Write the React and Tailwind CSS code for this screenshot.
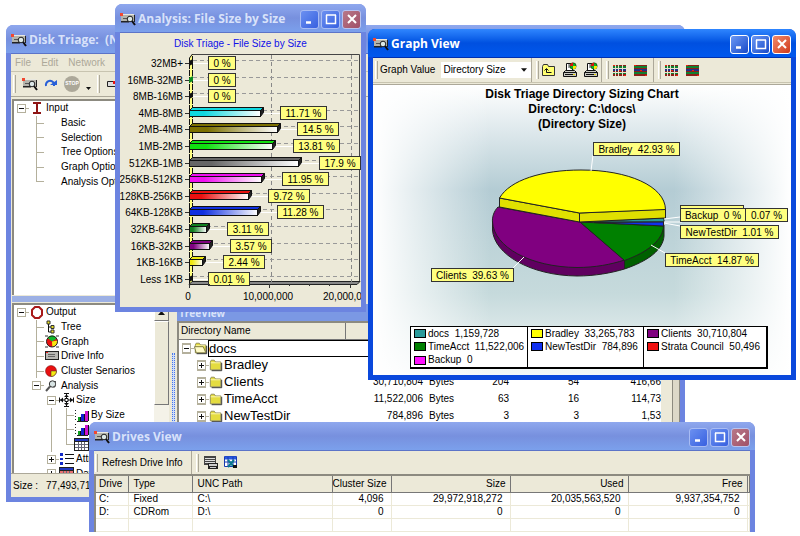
import React from 'react';

/* ---------- small drawings ---------- */

function DiskIcon() {
  return (
    <svg viewBox="0 0 16 14" className="h-3.5 w-4 shrink-0">
      <path d="M1 2h13v7H1z" fill="#b4b4ac" />
      <path d="M2 2h12v1H2z" fill="#e8e8e0" />
      <path d="M1 9h8v1.500H1zM14 3h1v7h-1z" fill="#222" />
      <path d="M3 6h4v1H3z" fill="#555" />
      <path d="M0 1h3v3H0z" fill="#f04830" />
      <circle cx="10" cy="7" r="2.800" fill="#dce8e8" stroke="#222" />
      <path d="M12 9l3 4" stroke="#111" strokeWidth="2" />
    </svg>
  );
}

function FolderIcon({ open = false }) {
  return (
    <svg viewBox="0 0 16 14" className="h-3.5 w-3.5 shrink-0">
      <path d="M1.500 12.500h12v-9h-6l-1.500-2h-3.500l-1 2z" fill="#e4dc40" stroke="#8a8650" />
      <path d="M2 4h11v1H2z" fill="#fffbc0" />
      {open && <path d="M0.500 5.500h10l3 7h-11z" fill="#fffbc8" stroke="#77733a" />}
      <path d="M14.500 4.500v9H3" fill="none" stroke="#222" />
    </svg>
  );
}

function UpFolderIcon() {
  return (
    <svg viewBox="0 0 16 14" className="h-3.5 w-4">
      <path d="M1.500 12.500v-9l1-2h4l1 2h6v9z" fill="#ffff70" stroke="#333" />
      <path d="M5.500 9.500h5M3.500 7.500l2-2 2 2M5.500 6v3.500" fill="none" stroke="#111" />
    </svg>
  );
}

function PrinterIcon() {
  return (
    <svg viewBox="0 0 16 16" className="size-4">
      <path d="M4.500 8.500v-7h6v7z" fill="#fff" stroke="#111" />
      <path d="M6 3h3M6 5h3" stroke="#444" />
      <circle cx="11" cy="4" r="3.200" fill="#10b020" stroke="#111" strokeWidth=".5" />
      <path d="M11 4V.8A3.200 3.200 0 0 0 8 4z" fill="#e01010" />
      <path d="M11 4h3.200A3.200 3.200 0 0 1 11 7.200z" fill="#ffe800" />
      <path d="M1.500 10.500l2-2h9l2 2v4h-13z" fill="#c8c8c0" stroke="#111" />
      <path d="M1.500 10.500h13M3 12.500h8" stroke="#111" />
      <path d="M11 12h2v1h-2z" fill="#e0d000" />
    </svg>
  );
}

function PatchIcon({ split = false }) {
  return (
    <svg viewBox="0 0 13 11" className="h-[11px] w-[13px]" shapeRendering="crispEdges">
      <path d="M0 0h13v11H0z" fill="#8a2018" />
      <path d="M0 1h13v2H0zM0 7h13v2H0z" fill="#108030" />
      <path d="M0 4h13v2H0z" fill="#203088" />
      {split && <path d="M2 0h1v11H2zM5 0h1v11H5zM9 0h1v11H9zM0 3h13v1H0zM0 7h13v1H0z" fill="#e6e2cc" />}
      <path d="M0 0h2v1H0zM11 10h2v1h-2zM6 5h2v1H6z" fill="#f02010" />
    </svg>
  );
}

function BarsIcon() {
  return (
    <svg viewBox="0 0 14 13" className="h-[13px] w-3.5 shrink-0" shapeRendering="crispEdges">
      <path d="M0 1h1v1H0zM0 4h1v1H0zM0 7h1v1H0zM0 10h1v1H0zM2 12h11v1H2z" fill="#222" />
      <path d="M3 8h2v4H3z" fill="#10a020" />
      <path d="M6 5h3v7H6z" fill="#1020d0" />
      <path d="M10 2h3v10h-3z" fill="#d010d0" />
      <path d="M5 8h1v4H5zM9 5h1v7H9zM13 2h1v10h-1z" fill="#111" />
    </svg>
  );
}

function GridIcon({ color = '#fff' }) {
  return (
    <svg viewBox="0 0 15 13" className="h-[13px] w-[15px] shrink-0" shapeRendering="crispEdges">
      <path d="M0 0h15v13H0z" fill="#222" />
      <path d="M1 1h13v2H1z" fill="#2038c0" />
      <path d="M1 4h13v8H1z" fill={color} />
      <path d="M4 4h1v8H4zM7 4h1v8H7zM10 4h1v8h-1zM1 6h13v1H1zM1 9h13v1H1z" fill="#667" />
    </svg>
  );
}

const treeIcons = {
  input: (
    <svg viewBox="0 0 10 12" className="h-3 w-2.5" shapeRendering="crispEdges">
      <path d="M1 0h8v2H6v8h3v2H1v-2h3V2H1z" fill="#8e1414" />
    </svg>
  ),
  output: (
    <svg viewBox="0 0 12 13" className="h-[13px] w-3">
      <path d="M4 1h4l3 3v5l-3 3H4L1 9V4z" fill="none" stroke="#a81818" strokeWidth="2" />
    </svg>
  ),
  tree: (
    <svg viewBox="0 0 12 14" className="h-3.5 w-3">
      <path d="M2.500 2v10h4M2.500 7h4" fill="none" stroke="#111" />
      <path d="M1 1h3v3H1zM5 5.500h3v3H5zM5 10h3v3H5z" fill="#e8e020" stroke="#333" />
    </svg>
  ),
  graph: (
    <svg viewBox="0 0 14 13" className="h-[13px] w-3.5">
      <path d="M0 1h3M11 1h3M0 12h3M11 12h3" stroke="#333" />
      <circle cx="7" cy="6.500" r="5.500" fill="#e81010" />
      <path d="M7 6.500L2.500 3a5.500 5.500 0 0 1 9.500.5z" fill="#10b828" />
      <path d="M7 6.500l5.300-1a5.500 5.500 0 0 1-5 6.500z" fill="#f8e810" />
      <circle cx="7" cy="6.500" r="5.500" fill="none" stroke="#222" />
    </svg>
  ),
  drive: (
    <svg viewBox="0 0 14 10" className="h-2.5 w-3.5" shapeRendering="crispEdges">
      <path d="M0 0h14v9H0z" fill="#222" />
      <path d="M1 1h12v7H1z" fill="#b8b8b4" />
      <path d="M3 3h7v1H3zM3 5h7v1H3z" fill="#666" />
      <path d="M1 1h2v1H1z" fill="#f02020" />
    </svg>
  ),
  cluster: (
    <svg viewBox="0 0 13 12" className="h-3 w-[13px]">
      <circle cx="6" cy="6" r="5.500" fill="#e81010" stroke="#611" strokeWidth=".5" />
      <path d="M6 6h5.500A5.500 5.500 0 0 1 6 11.500z" fill="#f8e810" stroke="#333" strokeWidth=".5" />
    </svg>
  ),
  analysis: (
    <svg viewBox="0 0 13 12" className="h-3 w-[13px]">
      <circle cx="7.500" cy="4" r="3.200" fill="#d8e4e4" stroke="#333" />
      <path d="M10.500 1v5l-2 2" fill="none" stroke="#555" />
      <path d="M5 6.500L1 11" stroke="#555" strokeWidth="2" />
    </svg>
  ),
  size: (
    <svg viewBox="0 0 15 14" className="h-3.5 w-[15px]">
      <path d="M7.500 1v12M1 7h13M0.500 4.500v5M14.500 4.500v5M5 .5h5M5 13.500h5" stroke="#111" />
      <path d="M7.500 1.500L5 4h5zM7.500 12.500L5 10h5zM1 7l3-2.500v5zM14 7l-3-2.500v5z" fill="#111" />
      <path d="M6 5.500h3v3H6z" fill="#fff" stroke="#111" />
    </svg>
  ),
  bars: <BarsIcon />,
  grid: <GridIcon />,
  list: (
    <svg viewBox="0 0 14 12" className="h-3 w-3.5" shapeRendering="crispEdges">
      <path d="M0 0h3v3H0zM0 5h3v2H0zM0 9h3v3H0z" fill="#1028c8" />
      <path d="M5 1h9v1H5zM5 5h9v1H5zM5 10h9v1H5z" fill="#111" />
    </svg>
  ),
  date: <GridIcon color="#e87070" />,
};

/* ---------- window chrome ---------- */

function CaptionButton({ label, close = false, active, children }) {
  const tone = close
    ? active
      ? 'bg-linear-to-br from-[#f08868] to-[#d03818] border-white'
      : 'bg-linear-to-br from-[#b87888] to-[#a05068] border-[#b8c4f0]'
    : active
      ? 'bg-linear-to-br from-[#6c98f4] to-[#1848c8] border-white'
      : 'bg-linear-to-br from-[#6c90f0] to-[#3860e0] border-[#a8bcf4]';
  return (
    <button type="button" aria-label={label} className={`flex size-[19px] items-center justify-center rounded-[3px] border ${tone}`}>
      <svg viewBox="0 0 12 12" className="size-3" stroke="#fff" fill="none">
        {children}
      </svg>
    </button>
  );
}

function TitleBar({ title, active = false, buttons = true }) {
  return (
    <header
      className={`flex h-7 shrink-0 items-center gap-0.5 rounded-t-[6px] px-[5px] pt-0.5 ${
        active
          ? 'bg-linear-to-b from-[#2f86ff] via-[#0050e0] to-[#0058ee]'
          : 'bg-linear-to-b from-[#8fa8ee] via-[#7790de] to-[#7ba0ec]'
      }`}
    >
      <DiskIcon />
      <h1 className={`flex-1 whitespace-pre font-["Open_Sans",sans-serif] text-[12px] leading-4 font-bold ${active ? 'text-white' : 'text-[#d8e2fa]'}`}>
        {title}
      </h1>
      {buttons && (
        <div className="flex gap-0.5">
          <CaptionButton label="Minimize" active={active}><path d="M2 9.500h5" strokeWidth="2.500" /></CaptionButton>
          <CaptionButton label="Maximize" active={active}><path d="M1.500 2v8.500h9V2M1 2h10" strokeWidth="1.500" /></CaptionButton>
          <CaptionButton label="Close" active={active} close><path d="M2 2l8 8M10 2l-8 8" strokeWidth="2" /></CaptionButton>
        </div>
      )}
    </header>
  );
}

function Win({ className, active = false, title, buttons, children }) {
  return (
    <section className={`absolute flex flex-col overflow-hidden rounded-t-[7px] ${active ? 'bg-[#0a48dc]' : 'bg-[#6c84e0]'} ${className}`}>
      <TitleBar title={title} active={active} buttons={buttons} />
      <div className={`mx-[5px] mb-[5px] flex min-h-0 flex-1 flex-col border-t ${active ? 'border-[#0030b0]' : 'border-[#5c74c8]'} bg-[#ece9d8]`}>
        {children}
      </div>
    </section>
  );
}

function Grip() {
  return <span className="h-[18px] w-[3px] shrink-0 border-r border-l border-r-[#aca899] border-l-white" />;
}

function Divider() {
  return <span className="h-full w-px shrink-0 bg-[#aca899]" />;
}

/* ---------- tree ---------- */

function Guide({ kind }) {
  const line = '#b4b09c';
  return (
    <svg viewBox="0 0 15 15" className="h-full w-[15px] shrink-0" preserveAspectRatio="none" shapeRendering="crispEdges">
      {(kind === 'v' || kind === 't') && <path d="M7 0h1v15H7z" fill={line} />}
      {kind === 'l' && <path d="M7 0h1v7H7z" fill={line} />}
      {(kind === 't' || kind === 'l') && <path d="M7 7h8v1H7z" fill={line} />}
      {(kind === '-' || kind === '+') && (
        <g>
          <path d="M3 3h9v9H3z" fill="#b4b09c" />
          <path d="M4 4h7v7H4z" fill="#fff" />
          <path d="M5 7h5v1H5z" fill="#111" />
          {kind === '+' && <path d="M7 5h1v5H7z" fill="#111" />}
          <path d="M12 7h3v1h-3z" fill={line} />
        </g>
      )}
    </svg>
  );
}

function Tree({ label, rows, className }) {
  return (
    <ul aria-label={label} className={`flex flex-col ${className}`}>
      {rows.map(([guides, icon, text], i) => (
        <li key={i} className="flex min-h-0 flex-1 items-center">
          {guides.split('').map((g, j) => (
            <Guide key={j} kind={g} />
          ))}
          <span className="flex w-[15px] shrink-0 justify-center">{treeIcons[icon]}</span>
          <span className="pl-0.5 text-[10px] leading-3 whitespace-nowrap">{text}</span>
        </li>
      ))}
    </ul>
  );
}

const inputRows = [
  ['-', 'input', 'Input'],
  [' t', '', 'Basic'],
  [' t', '', 'Selection'],
  [' t', '', 'Tree Options'],
  [' t', '', 'Graph Options'],
  [' l', '', 'Analysis Options'],
];

const outputRows = [
  ['-', 'output', 'Output'],
  [' t', 'tree', 'Tree'],
  [' t', 'graph', 'Graph'],
  [' t', 'drive', 'Drive Info'],
  [' t', 'cluster', 'Cluster Senarios'],
  [' -', 'analysis', 'Analysis'],
  ['  -', 'size', 'Size'],
  ['  vt', 'bars', 'By Size'],
  ['  vt', 'bars', 'By Count'],
  ['  vl', 'grid', 'Table'],
  ['  +', 'list', 'Attributes'],
  ['  +', 'date', 'Dates'],
];

const directories = [
  ['docs', '', '', '', ''],
  ['Bradley', '33,265,783', '310', '48', '502,11'],
  ['Clients', '30,710,804', '204', '54', '416,66'],
  ['TimeAcct', '11,522,006', '63', '16', '114,73'],
  ['NewTestDir', '784,896', '3', '3', '1,53'],
];

function MainWindow() {
  return (
    <Win className="top-[25px] left-[6px] h-[477px] w-[679px]" title="Disk Triage:  (New)" buttons={false}>
      <nav className="flex h-[17px] shrink-0 items-center gap-2.5 px-1 text-[10px] leading-4 text-[#aca899]">
        <button type="button">File</button>
        <button type="button">Edit</button>
        <button type="button">Network</button>
      </nav>
      <div className="flex h-[26px] shrink-0 items-center gap-1.5 border-y border-t-[#c8c4b0] border-b-[#aca899] px-0.5">
        <Grip />
        <button type="button" aria-label="Scan drive"><DiskIcon /></button>
        <button type="button" aria-label="Refresh">
          <svg viewBox="0 0 14 12" className="h-3 w-3.5"><path d="M2 8a4 4 0 0 1 8-2v2" fill="none" stroke="#2860d8" strokeWidth="2" /><path d="M6 7h7V2z" fill="#2860d8" /></svg>
        </button>
        <button type="button" aria-label="Stop" className="flex h-4 w-4 items-center justify-center rounded-full bg-[#aca899] text-[5px] font-bold text-white">STOP</button>
        <svg viewBox="0 0 5 14" className="h-3.5 w-[5px]"><path d="M0 10h5l-2.500 3z" fill="#111" /></svg>
        <Grip />
        <svg viewBox="0 0 14 12" className="h-3 w-3.5 shrink-0"><path d="M1.500 3.500h11v5h-11z" fill="#ddd" stroke="#222" /><path d="M9 0h3v3h2v3H7V3h2z" fill="#e81010" /></svg>
      </div>
      <div className="flex min-h-0 flex-1 pt-0.5 pl-px">
        <div className="flex w-[157px] shrink-0 flex-col">
          <div className="h-[196px] shrink-0 border-t-2 border-l-2 border-[#8c8a80] bg-white">
            <Tree label="Input" rows={inputRows} className="h-[88px]" />
          </div>
          <div className="my-px h-[6px] shrink-0 bg-[#9cb0e4]" />
          <div className="flex min-h-0 flex-1 overflow-hidden border-t-2 border-l-2 border-[#8c8a80] bg-white">
            <Tree label="Output" rows={outputRows} className="h-44 min-w-0 flex-1 overflow-hidden" />
            <div className="flex w-[15px] shrink-0 flex-col bg-[#f4f2e8]">
              <button type="button" aria-label="Scroll up" className="flex h-4 shrink-0 items-center justify-center border border-white border-r-[#777] border-b-[#777] bg-[#ece9d8]">
                <svg viewBox="0 0 7 4" className="h-1 w-[7px]"><path d="M0 4h7L3.500 0z" fill="#111" /></svg>
              </button>
              <div className="h-[84px] border border-white border-r-[#777] border-b-[#777] bg-[#ece9d8]" />
            </div>
          </div>
        </div>
        <div className="flex w-2 shrink-0 flex-col items-center justify-end pb-10">
          <span className="h-20 w-[3px] border-x border-dotted border-[#4878e8] bg-[#d0dcf8]" />
        </div>
        <div className="flex min-w-0 flex-1 flex-col">
          <div className="h-[205px] shrink-0" />
          <h2 className="flex h-[17px] shrink-0 items-center bg-[#7b98e4] px-0.5 font-['Open_Sans',sans-serif] text-[10px] leading-3 font-bold text-[#d8e2fa]">TreeView</h2>
          <div className="flex min-h-0 flex-1 border-t-2 border-l-2 border-[#8c8a80] bg-white">
            <table className="w-[482px] shrink-0 table-fixed border-collapse self-start">
              <colgroup>
                <col className="w-[166px]" />
                <col className="w-[78px]" />
                <col className="w-[34px]" />
                <col className="w-[52px]" />
                <col className="w-[70px]" />
                <col />
              </colgroup>
              <thead>
                <tr className="h-4 bg-[#ece9d8] text-left text-[10px] leading-3">
                  <th className="border-r border-b border-[#777] px-0.5 font-normal">Directory Name</th>
                  <th className="border-b border-[#777]" />
                  <th className="border-b border-[#777]" />
                  <th className="border-b border-[#777]" />
                  <th className="border-b border-[#777]" />
                  <th className="border-b border-[#777]" />
                </tr>
              </thead>
              <tbody>
                {directories.map(([name, size, files, dirs, used], i) => (
                  <tr key={name} className="h-[17px] text-right text-[10px] leading-4">
                    <td className="p-0" colSpan={i ? 1 : 2}>
                      <div className={`flex h-[17px] items-center text-left text-[13px] leading-4 ${i ? 'pl-[15px]' : ''}`}>
                        <Guide kind={i ? '+' : '-'} />
                        <FolderIcon open={!i} />
                        <span className={`h-full flex-1 ${i ? 'pl-px' : 'border border-r-0 border-black'}`}>{name}</span>
                      </div>
                    </td>
                    {i > 0 && <td className="p-0">{size}</td>}
                    <td className="p-0 pl-1.5 text-left">{size && 'Bytes'}</td>
                    <td className="p-0">{files}</td>
                    <td className="p-0">{dirs}</td>
                    <td className="p-0">{used}</td>
                  </tr>
                ))}
              </tbody>
            </table>
            <div className="flex-1 bg-[#ece9d8]" />
            <div className="w-2 shrink-0 border-x border-[#8c8a80] bg-[#dcd8c8]" />
          </div>
        </div>
      </div>
      <footer className="flex h-6 shrink-0 items-center gap-2 border-t border-[#aca899] px-0.5 text-[10px] leading-4">
        <span>Size :</span>
        <span>77,493,713</span>
      </footer>
    </Win>
  );
}

/* ---------- file size analysis ---------- */

const sizeBars = [
  ['32MB+', 0, 208, 28, '0 %', '#111111'],
  ['16MB-32MB', 0, 208, 28, '0 %', '#0a8a20'],
  ['8MB-16MB', 0, 208, 28, '0 %', '#111111'],
  ['4MB-8MB', 261, 280, 47, '11.71 %', '#10d8e0'],
  ['2MB-4MB', 278, 297, 42, '14.5 %', '#7c7000'],
  ['1MB-2MB', 273, 293, 47, '13.81 %', '#10e010'],
  ['512KB-1MB', 299, 319, 42, '17.9 %', '#666666'],
  ['256KB-512KB', 262, 282, 47, '11.95 %', '#f010f0'],
  ['128KB-256KB', 249, 268, 42, '9.72 %', '#e81010'],
  ['64KB-128KB', 258, 277, 47, '11.28 %', '#1030e0'],
  ['32KB-64KB', 207, 227, 42, '3.11 %', '#108020'],
  ['16KB-32KB', 210, 230, 42, '3.57 %', '#800080'],
  ['1KB-16KB', 203, 223, 42, '2.44 %', '#f0e810'],
  ['Less 1KB', 0, 208, 42, '0.01 %', '#111111'],
];

function Tag({ x, y, w, text }) {
  return (
    <g>
      <rect x={x + 0.5} y={y + 0.5} width={w - 1} height="13" fill="#ffff80" stroke="#333" />
      <text x={x + w / 2} y={y + 11} textAnchor="middle" className="whitespace-pre">{text}</text>
    </g>
  );
}

function AnalysisWindow() {
  return (
    <Win className="top-[4px] left-[115px] h-[308px] w-[251px]" title="Analysis: File Size by Size">
      <h2 className="pt-1 pb-0.5 text-center text-[10px] leading-[14px] text-[#1010e8]">Disk Triage - File Size by Size</h2>
      <svg viewBox="120 53 241 254" className="w-full text-[10px]" role="img" aria-label="File size by size">
        <defs>
          {sizeBars.map(([name, , , , , color], i) => (
            <linearGradient key={name} id={`bar-${i}`}>
              <stop offset="0" stopColor={color} />
              <stop offset="0.2" stopColor={color} />
              <stop offset="1" stopColor="#fff" />
            </linearGradient>
          ))}
        </defs>
        <path d="M189.500 58l3-4v228l-3 4z" fill="#ffff80" stroke="#111" strokeDasharray="6 1" />
        <path d="M192.500 54.500H359.500V282" fill="none" stroke="#444" />
        <path d="M189 284.500l3-3h168l-3 3z" fill="#888" stroke="#222" />
        <path d="M271.500 55v227M351.500 55v227" stroke="#888" strokeDasharray="4 3" />
        {sizeBars.map(([name], i) => (
          <path key={name} d={`M193 ${Math.round(60 + i * 16.6) + 0.5}h166`} stroke="#999" strokeDasharray="4 3" />
        ))}
        {sizeBars.map(([name, end, tagX, tagW, value, color], i) => {
          const y = Math.round(63 + i * 16.6);
          return (
            <g key={name}>
              <text x="183" y={y + 4} textAnchor="end">{name}</text>
              <path d={`M185 ${y + 0.5}h4`} stroke="#333" />
              <path d={`M${end || 190} ${y + 0.5}H${tagX}`} stroke="#fff" />
              {end > 0 && (
                <g stroke="#111">
                  <path d={`M189.500 ${y - 2.5}l3-3H${end + 2.5}l-3 3z`} fill={color} />
                  <path d={`M${end - 0.5} ${y - 2.5}l3-3v5l-3 4z`} fill="#222" />
                  <rect x="189.500" y={y - 2.5} width={end - 190} height="6" fill={`url(#bar-${i})`} />
                </g>
              )}
              {!end && <path d={`M189 ${y - 2}l4-2v5l-4 2z`} fill={color} />}
              <Tag x={tagX} y={y - 7} w={tagW} text={value} />
            </g>
          );
        })}
        <path d="M189.500 284v4M269.500 284v4M350.500 284v4M209.500 284v2M229.500 284v2M249.500 284v2M289.500 284v2M309.500 284v2M329.500 284v2" stroke="#333" />
        <text x="188" y="300" textAnchor="middle">0</text>
        <text x="268" y="300" textAnchor="middle">10,000,000</text>
        <text x="323" y="300">20,000,000</text>
      </svg>
    </Win>
  );
}

/* ---------- graph view ---------- */

const legend = [
  ['docs', '1,159,728', 'bg-[#2a9a9a]'],
  ['Bradley', '33,265,783', 'bg-[#ffff00]'],
  ['Clients', '30,710,804', 'bg-[#800080]'],
  ['TimeAcct', '11,522,006', 'bg-[#008000]'],
  ['NewTestDir', '784,896', 'bg-[#1030f0]'],
  ['Strata Council', '50,496', 'bg-[#f01010]'],
  ['Backup', '0', 'bg-[#ff10ff]'],
  null,
  null,
];

function GraphWindow() {
  return (
    <Win active className="top-[29px] left-[368px] h-[351px] w-[428px]" title="Graph View">
      <div className="flex h-[25px] shrink-0 items-center border-b border-[#c8c4b0] pl-0.5 text-[10px] leading-4">
        <Grip />
        <label htmlFor="graph-value" className="pr-1.5 pl-0.5">Graph Value</label>
        <span className="flex h-4 w-[90px] items-center bg-white">
          <select id="graph-value" defaultValue="size" className="h-4 min-w-0 flex-1 appearance-none bg-transparent pl-0.5 leading-4">
            <option value="size">Directory Size</option>
          </select>
          <svg viewBox="0 0 9 5" className="mr-1 h-1.5 w-1.5"><path d="M0 0h9L4.500 5z" fill="#111" /></svg>
        </span>
        <span className="flex h-full items-center gap-1"><Divider /><Grip /></span>
        <span className="flex items-center gap-[5px] px-0.5">
          <button type="button" aria-label="Up one level"><UpFolderIcon /></button>
          <button type="button" aria-label="Print graph"><PrinterIcon /></button>
          <button type="button" aria-label="Print all graphs"><PrinterIcon /></button>
        </span>
        <span className="flex h-full items-center gap-1"><Divider /><Grip /></span>
        <span className="flex items-center gap-2 px-1">
          <button type="button" aria-label="Pattern fill"><PatchIcon split /></button>
          <button type="button" aria-label="Solid fill"><PatchIcon /></button>
        </span>
        <span className="flex h-full items-center gap-1 pl-0.5"><Divider /><Grip /></span>
        <span className="flex items-center gap-2 px-1">
          <button type="button" aria-label="Pattern border"><PatchIcon split /></button>
          <button type="button" aria-label="Solid border"><PatchIcon /></button>
        </span>
      </div>
      <div className="mt-px flex flex-1 flex-col border-t border-[#aca899] bg-[linear-gradient(to_right,#fff,#ffffff00_28%,#ffffff00_72%,#fff),linear-gradient(to_bottom,#fff,#b4ccd4_36%,#c6dadc_72%,#f4f8f8)]">
        <h2 className="pt-0.5 pb-0.5 text-center text-[12px] leading-[15px] font-bold">
          Disk Triage Directory Sizing Chart
          <br />
          Directory: C:\docs\
          <br />
          (Directory Size)
        </h2>
        <svg viewBox="373 134 418 192" className="w-full text-[10px]" role="img" aria-label="Directory size pie chart">
          <g stroke="#222" strokeLinejoin="round">
            <path d="M492.500 222v8C494 254 530 275.500 577 276c18 0 34-3 47.500-7v-9L580 222z" fill="#600060" />
            <path d="M624.500 260v9C648 261 663 250 664 236v-11z" fill="#006000" />
            <path d="M498 207C494 211 492 217 492.500 222 494 247 530 267 577 267.500c18 0 34-3 47.500-7.500L580 222z" fill="#800080" />
            <path d="M580 222l44.500 38.500C648 252 663 240 663.500 226z" fill="#008000" />
            <path d="M580 222l84-4v4z" fill="#2a9a9a" />
            <path d="M594 222.500l69.500-.5v4z" fill="#1030f0" />
            <path d="M499.500 198v9l80 15 86-4v-9l-86 4z" fill="#e0e000" />
            <path d="M579.500 213v9" />
            <path d="M499.500 198C510 180 542 170 581 170c47 0 84 16 84.500 39.500l-86 3.500z" fill="#ffff00" />
          </g>
          <path d="M593 155l-2 16M513 268l11-11M651 245l14 8M664 219l16-2M664 222h18M664 223l16 3" stroke="#fff" fill="none" />
          <rect x="680.500" y="205.500" width="63" height="13" fill="#ffff80" stroke="#333" />
          <Tag x={593} y={142} w={87} text="Bradley  42.93 %" />
          <Tag x={431} y={268} w={83} text="Clients  39.63 %" />
          <Tag x={745} y={208} w={43} text="0.07 %" />
          <Tag x={680} y={208} w={66} text="Backup  0 %" />
          <Tag x={680} y={225} w={99} text="NewTestDir  1.01 %" />
          <Tag x={665} y={253} w={94} text="TimeAcct  14.87 %" />
        </svg>
        <ul className="mr-[23px] ml-[37px] grid h-[43px] grid-cols-[116px_116px_1fr] grid-rows-3 border border-r-2 border-b-2 border-black bg-white text-[10px] leading-3">
          {legend.map((item, i) => (
            <li key={i} className={`flex items-center gap-0.5 pl-[3px] whitespace-pre ${i % 3 ? 'border-l border-black' : ''}`}>
              {item && <span className={`h-[9px] w-3 shrink-0 border border-black ${item[2]}`} />}
              {item && `${item[0]}  ${item[1]}`}
            </li>
          ))}
        </ul>
      </div>
    </Win>
  );
}

/* ---------- drives ---------- */

const driveHead = ['Drive', 'Type', 'UNC Path', 'Cluster Size', 'Size', 'Used', 'Free', ''];
const drives = [
  ['C:', 'Fixed', 'C:\\', '4,096', '29,972,918,272', '20,035,563,520', '9,937,354,752', ''],
  ['D:', 'CDRom', 'D:\\', '0', '0', '0', '0', ''],
  ['', '', '', '', '', '', '', ''],
];

function DrivesWindow() {
  return (
    <Win className="top-[422px] left-[89px] h-[110px] w-[666px]" title="Drives View">
      <div className="flex h-[23px] shrink-0 items-center gap-1 pl-px text-[10px] leading-4">
        <Grip />
        <button type="button" className="pr-1">Refresh Drive Info</button>
        <Divider />
        <Grip />
        <button type="button" aria-label="Print list" className="pr-0.5">
          <svg viewBox="0 0 15 15" className="size-[15px]" shapeRendering="crispEdges">
            <path d="M1 1h12v9H1z" fill="#444" /><path d="M2 3h10v1H2zM2 5h10v1H2zM2 7h10v1H2z" fill="#ddd" />
            <path d="M5 8h10v6H5z" fill="#222" /><path d="M6 9h8v2H6zM7 12h6v1H7z" fill="#ccc" />
          </svg>
        </button>
        <button type="button" aria-label="Export to spreadsheet">
          <svg viewBox="0 0 14 13" className="h-[13px] w-3.5">
            <path d="M.5 .5h12v10H.5z" fill="#fff" stroke="#1838b0" />
            <path d="M1 2h11" stroke="#2858e0" strokeWidth="3" /><path d="M1 6h11M4 1v9M9 1v9" stroke="#1838b0" />
            <path d="M4 4l6 7M10 4l-6 7" stroke="#0a7890" strokeWidth="2" /><path d="M9 9h4v3H9z" fill="#111" />
          </svg>
        </button>
      </div>
      <div className="flex-1 border-t-2 border-l-2 border-[#8c8a80] bg-white">
        <table className="w-full table-fixed border-collapse text-[10px] leading-3">
          <colgroup>
            <col className="w-8" />
            <col className="w-16" />
            <col className="w-[140px]" />
            <col className="w-[59px]" />
            <col className="w-[119px]" />
            <col className="w-[118px]" />
            <col className="w-[119px]" />
            <col />
          </colgroup>
          <thead>
            <tr className="h-4 bg-[#ece9d8]">
              {driveHead.map((h, i) => (
                <th key={i} className={`border-r border-b border-[#777] p-0 font-normal ${i > 2 ? 'pr-1 text-right' : i ? 'pl-[5px] text-left' : 'pl-[3px] text-left'}`}>{h}</th>
              ))}
            </tr>
          </thead>
          <tbody>
            {drives.map((row, r) => (
              <tr key={r} className="h-[13px]">
                {row.map((cell, i) => (
                  <td key={i} className={`border-r border-b border-[#ece9d8] p-0 ${i > 2 ? 'pr-[7px] text-right' : i ? 'pl-[5px]' : 'pl-[3px]'}`}>{cell}</td>
                ))}
              </tr>
            ))}
          </tbody>
        </table>
      </div>
    </Win>
  );
}

export default function App() {
  return (
    <main className='relative h-screen w-full overflow-hidden bg-white font-["Liberation_Sans",Arial,sans-serif] text-black'>
      <MainWindow />
      <AnalysisWindow />
      <GraphWindow />
      <DrivesWindow />
    </main>
  );
}
